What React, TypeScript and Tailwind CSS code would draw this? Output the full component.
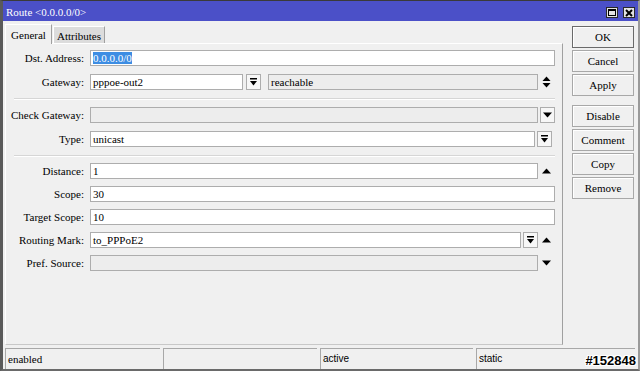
import React from "react";

function DropIcon() {
  return (
    <svg width="7" height="8" viewBox="0 0 7 8">
      <rect x="0" y="0" width="7" height="1.5" fill="#000" />
      <polygon points="0,3 7,3 3.5,7.5" fill="#000" />
    </svg>
  );
}
function DownTri() {
  return (
    <svg width="9" height="6" viewBox="0 0 9 6">
      <polygon points="0,0.5 9,0.5 4.5,5.5" fill="#000" />
    </svg>
  );
}
function UpTri() {
  return (
    <svg width="9" height="6" viewBox="0 0 9 6">
      <polygon points="0,5.5 9,5.5 4.5,0.5" fill="#000" />
    </svg>
  );
}
function UpDown() {
  return (
    <svg width="9" height="12" viewBox="0 0 9 12">
      <polygon points="0.5,5 8.5,5 4.5,0.5" fill="#000" />
      <polygon points="0.5,7 8.5,7 4.5,11.5" fill="#000" />
    </svg>
  );
}

function Field({
  children,
  disabled,
  className = "",
}: {
  children?: React.ReactNode;
  disabled?: boolean;
  className?: string;
}) {
  return (
    <div
      className={`h-[16px] border border-[#adadad] ${
        disabled ? "bg-[#ededed]" : "bg-white"
      } text-[11px] leading-[14px] pl-[2px] text-black whitespace-nowrap overflow-hidden ${className}`}
    >
      {children}
    </div>
  );
}

function DropBtn({ children }: { children: React.ReactNode }) {
  return (
    <div className="w-[15px] h-[16px] border border-[#adadad] bg-[#f7f7f7] flex items-center justify-center shrink-0">
      {children}
    </div>
  );
}

function Slot({ children }: { children?: React.ReactNode }) {
  return (
    <div className="w-[17px] h-[16px] flex items-center justify-center shrink-0">
      {children}
    </div>
  );
}

function Row({ label, children }: { label: string; children: React.ReactNode }) {
  return (
    <div className="flex items-center h-[16px]">
      <div className="w-[84px] pr-[6px] text-right text-[11px] leading-[14px] text-black whitespace-nowrap">
        {label}
      </div>
      <div className="flex-1 flex items-center h-[16px]">{children}</div>
    </div>
  );
}

function Sep() {
  return <div className="ml-[8px] h-[2px] border-t border-t-[#d6d6d6] border-b border-b-white" />;
}

function Btn({ label, def }: { label: string; def?: boolean }) {
  return (
    <div
      className={`w-[62px] h-[22px] border ${
        def ? "border-[#6a6a6a]" : "border-[#a8a8a8]"
      } bg-[#f0f0f0] shadow-[inset_1px_1px_0_#ffffff] flex items-center justify-center text-[11px] text-black`}
    >
      {label}
    </div>
  );
}

export default function App() {
  return (
    <div className="font-['Liberation_Serif'] relative w-[640px] h-[371px] bg-[#f0f0f0] flex flex-col overflow-hidden border-t border-t-[#3a3a3a] border-l-[3px] border-l-[#5a5a5a] border-r-[2px] border-r-[#9a9a9a] border-b-[2px] border-b-[#6a6a6a]">
      {/* title bar */}
      <div className="h-[20px] bg-[#4b50c8] flex items-center justify-between pl-[3px] pr-[3px] shrink-0">
        <span className="text-white text-[11px] leading-[14px] pt-[1px]">Route &lt;0.0.0.0/0&gt;</span>
        <div className="flex gap-[5px] pt-[3px]">
          <div className="w-[12px] h-[11px] bg-[#e4e4e4] border border-[#2a2a2a] flex items-center justify-center">
            <div className="w-[8px] h-[7px] border border-black border-t-2" />
          </div>
          <div className="w-[12px] h-[11px] bg-[#e4e4e4] border border-[#2a2a2a] flex items-center justify-center">
            <svg width="8" height="8" viewBox="0 0 8 8">
              <path d="M1 1 L7 7 M7 1 L1 7" stroke="#000" strokeWidth="2" />
            </svg>
          </div>
        </div>
      </div>

      {/* body */}
      <div className="flex-1 flex">
        <div className="w-[563px] pt-[2px] pb-[2px] flex flex-col">
          {/* tabs */}
          <div className="h-[20px] flex items-end pl-[2px] shrink-0">
            <div className="w-[47px] h-[20px] bg-[#f0f0f0] border-t border-l border-t-white border-l-white border-r border-r-[#a0a0a0] flex items-start justify-center pt-[3px] text-[11px] leading-[14px] text-black relative z-10 -mb-[1px]">
              General
            </div>
            <div className="w-[52px] h-[17px] ml-[1px] bg-[#dcdcdc] border-t border-l border-r border-t-white border-l-white border-r-[#a0a0a0] flex items-start justify-center pt-[2px] text-[11px] leading-[14px] text-black">
              Attributes
            </div>
          </div>
          {/* panel */}
          <div className="ml-[2px] w-[558px] flex-1 border-t border-l border-t-white border-l-white border-r border-b border-r-[#a0a0a0] border-b-[#c8c8c8] pr-[7px] pt-[6px] flex flex-col">
            <div className="flex flex-col gap-[8px]">
              <Row label="Dst. Address:">
                <Field className="flex-1">
                  <span className="bg-[#3d8de3] text-white">0.0.0.0/0</span>
                </Field>
              </Row>
              <Row label="Gateway:">
                <Field className="w-[153px] shrink-0">pppoe-out2</Field>
                <div className="w-[3px]" />
                <DropBtn>
                  <DropIcon />
                </DropBtn>
                <div className="w-[7px]" />
                <Field disabled className="flex-1">
                  reachable
                </Field>
                <Slot>
                  <UpDown />
                </Slot>
              </Row>
            </div>
            <div className="mt-[8px] mb-[7px]">
              <Sep />
            </div>
            <div className="flex flex-col gap-[8px]">
              <Row label="Check Gateway:">
                <Field disabled className="flex-1" />
                <div className="w-[2px]" />
                <DropBtn>
                  <DownTri />
                </DropBtn>
              </Row>
              <Row label="Type:">
                <Field className="flex-1">unicast</Field>
                <div className="w-[2px]" />
                <DropBtn>
                  <DropIcon />
                </DropBtn>
                <div className="w-[3px]" />
              </Row>
            </div>
            <div className="mt-[8px] mb-[6px]">
              <Sep />
            </div>
            <div className="flex flex-col gap-[7px]">
              <Row label="Distance:">
                <Field className="flex-1">1</Field>
                <Slot>
                  <UpTri />
                </Slot>
              </Row>
              <Row label="Scope:">
                <Field className="flex-1">30</Field>
              </Row>
              <Row label="Target Scope:">
                <Field className="flex-1">10</Field>
              </Row>
              <Row label="Routing Mark:">
                <Field className="flex-1">to_PPPoE2</Field>
                <div className="w-[2px]" />
                <DropBtn>
                  <DropIcon />
                </DropBtn>
                <Slot>
                  <UpTri />
                </Slot>
              </Row>
              <Row label="Pref. Source:">
                <Field disabled className="flex-1" />
                <Slot>
                  <DownTri />
                </Slot>
              </Row>
            </div>
          </div>
        </div>

        {/* buttons */}
        <div className="flex-1 pl-[6px] pt-[5px] flex flex-col">
          <div className="flex flex-col gap-[2px]">
            <Btn label="OK" def />
            <Btn label="Cancel" />
            <Btn label="Apply" />
          </div>
          <div className="flex flex-col gap-[2px] mt-[9px]">
            <Btn label="Disable" />
            <Btn label="Comment" />
            <Btn label="Copy" />
            <Btn label="Remove" />
          </div>
        </div>
      </div>

      {/* status bar */}
      <div className="h-[22px] pt-[1px] pl-[2px] pr-[3px] flex gap-[3px] shrink-0">
        <div className="w-[155px] h-[21px] border-t border-l border-[#a8a8a8] text-[11px] leading-[14px] pl-[2px] pt-[3px] text-black">
          enabled
        </div>
        <div className="w-[154px] h-[21px] border-t border-l border-[#a8a8a8]" />
        <div className="font-['Liberation_Sans'] w-[153px] h-[21px] border-t border-l border-[#a8a8a8] text-[10px] leading-[14px] pl-[2px] pt-[3px] text-black">
          active
        </div>
        <div className="font-['Liberation_Sans'] flex-1 h-[21px] border-t border-l border-[#a8a8a8] text-[10px] leading-[14px] pl-[2px] pt-[3px] text-black">
          static
        </div>
      </div>

      <div className="font-['Liberation_Sans'] absolute right-[2px] bottom-[1px] text-[13px] leading-[14px] font-bold text-black [text-shadow:1px_0_0_#fff,-1px_0_0_#fff,0_1px_0_#fff,0_-1px_0_#fff,1px_1px_0_#fff,-1px_-1px_0_#fff,1px_-1px_0_#fff,-1px_1px_0_#fff]">
        #152848
      </div>
    </div>
  );
}
